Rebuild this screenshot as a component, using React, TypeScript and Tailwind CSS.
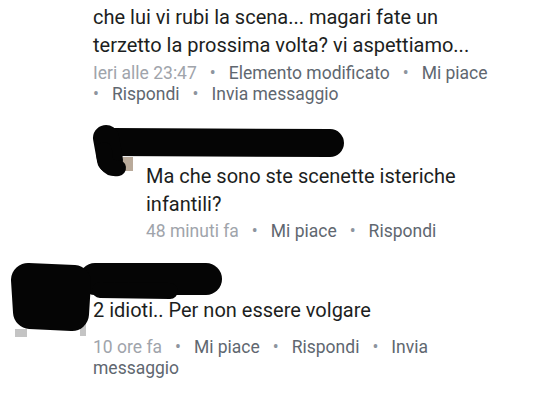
import React from "react";

const Dot = () => <span className="mx-[13px] text-[#8d949e]">•</span>;

export default function App() {
  return (
    <div
      className="relative h-[400px] w-[539px] overflow-hidden bg-white"
      style={{ fontFamily: "Roboto, 'Noto Sans', sans-serif" }}
    >
      {/* Comment 1 (continued) */}
      <div className="pl-[93px] pt-[3px]">
        <p className="text-[20px] leading-[28px] text-[#1c1e21]">
          che lui vi rubi la scena... magari fate un
          <br />
          terzetto la prossima volta? vi aspettiamo...
        </p>
        <div className="mt-[4px] text-[17.5px] leading-[21px] text-[#606770]">
          <span className="text-[#a0a4ab]">Ieri alle 23:47</span>
          <Dot />
          <span>Elemento modificato</span>
          <Dot />
          <span>Mi piace</span>
          <br />
          <span className="text-[#8d949e]">•</span>
          <span className="ml-[13px]">Rispondi</span>
          <Dot />
          <span>Invia messaggio</span>
        </div>

        {/* Comment 2 (nested reply) */}
        <div className="mt-[22px] flex">
          <div className="relative h-[48px] w-[40px] shrink-0">
            <div className="absolute left-[30px] top-[30px] h-[14px] w-[10px] bg-[#b9aa9a]" />
          </div>
          <div className="ml-[13px]">
            <div className="h-[35px] text-[15px] font-bold text-[#1c1e21]">A.</div>
            <p className="text-[20px] leading-[28px] text-[#1c1e21]">
              Ma che sono ste scenette isteriche
              <br />
              infantili?
            </p>
            <div className="mt-[3px] text-[17.5px] leading-[21px] text-[#606770]">
              <span className="text-[#a0a4ab]">48 minuti fa</span>
              <Dot />
              <span>Mi piace</span>
              <Dot />
              <span>Rispondi</span>
            </div>
          </div>
        </div>
      </div>

      {/* Comment 3 */}
      <div className="mt-[24px] flex">
        <div className="relative ml-[12px] h-[75px] w-[70px] shrink-0">
          <div className="absolute bottom-[4px] left-[3px] h-[8px] w-[12px] bg-[#c4c4c4]" />
          <div className="absolute bottom-[5px] right-[-4px] h-[14px] w-[6px] bg-[#c4c4c4]" />
        </div>
        <div className="ml-[11px]">
          <div className="h-[30px]" />
          <p className="text-[20px] leading-[28px] text-[#1c1e21]">
            2 idioti.. Per non essere volgare
          </p>
          <div className="mt-[13px] text-[17.5px] leading-[21px] text-[#606770]">
            <span className="text-[#a0a4ab]">10 ore fa</span>
            <Dot />
            <span>Mi piace</span>
            <Dot />
            <span>Rispondi</span>
            <Dot />
            <span>Invia</span>
            <br />
            <span>messaggio</span>
          </div>
        </div>
      </div>

      {/* Redaction scribbles */}
      <svg
        className="pointer-events-none absolute left-0 top-0"
        width="539"
        height="400"
        viewBox="0 0 539 400"
      >
        <g fill="#050505" stroke="#050505" strokeLinecap="round" strokeLinejoin="round">
          <path d="M112 142 L330 143" strokeWidth="28" fill="none" />
          <path d="M106 138 L110 160" strokeWidth="26" fill="none" />
          <path d="M104 150 Q104 170 118 168" strokeWidth="16" fill="none" />
          <path d="M95 279 L206 279" strokeWidth="32" fill="none" />
          <path d="M100 290 L170 291" strokeWidth="16" fill="none" />
          <path d="M28 280 L30 312 L72 314 L74 282 Z" strokeWidth="34" />
        </g>
      </svg>
    </div>
  );
}
